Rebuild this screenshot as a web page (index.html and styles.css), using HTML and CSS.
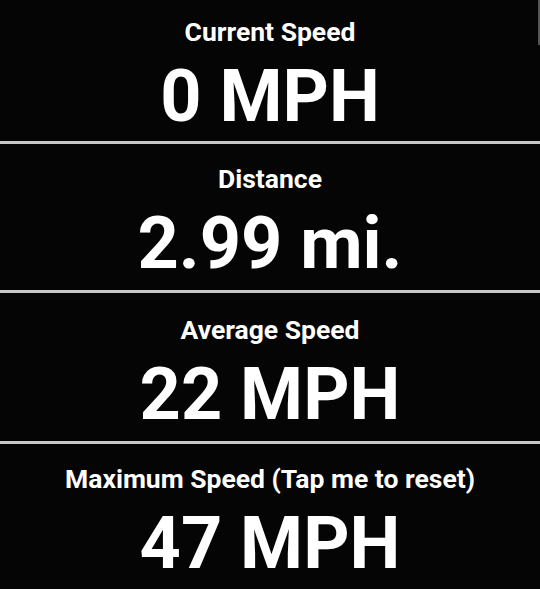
FILE: index.html
```html
<!DOCTYPE html>
<html>

<head>
    <meta charset="utf-8">
    <title>Speedometer</title>
    <link rel="stylesheet" href="styles.css">
</head>

<body>

    <div class="stats">
        <div class="panel">
            <div class="label">Current Speed</div>
            <div class="value">0 MPH</div>
        </div>
        <div class="panel">
            <div class="label">Distance</div>
            <div class="value">2.99 mi.</div>
        </div>
        <div class="panel">
            <div class="label">Average Speed</div>
            <div class="value">22 MPH</div>
        </div>
        <div class="panel reset">
            <div class="label">Maximum Speed (Tap me to reset)</div>
            <div class="value">47 MPH</div>
        </div>
    </div>

    <div class="scroll-thumb"></div>

</body>

</html>
```

FILE: styles.css
```css
html,
body {
    margin: 0;
    padding: 0;
    background-color: #050505;
}

body {
    font-family: "Roboto", "Liberation Sans", sans-serif;
    color: #fff;
    overflow: hidden;
}

.stats {
    display: flex;
    flex-direction: column;
}

.panel {
    padding: 20px 0 6px;
    border-bottom: 3px solid #c8c8c8;
    text-align: center;
}

.panel:first-child {
    padding-top: 17px;
    padding-bottom: 4px;
}

.panel:nth-child(3) {
    padding-top: 22px;
    padding-bottom: 6px;
}

.panel:last-child {
    border-bottom: none;
}

.label {
    font-size: 26.5px;
    line-height: 30px;
    font-weight: bold;
}

.value {
    margin-top: 10px;
    font-size: 72px;
    line-height: 80px;
    font-weight: bold;
}

.reset {
    cursor: pointer;
}

.scroll-thumb {
    position: fixed;
    top: 0;
    right: 0;
    width: 2px;
    height: 45px;
    background-color: #555;
}
```
